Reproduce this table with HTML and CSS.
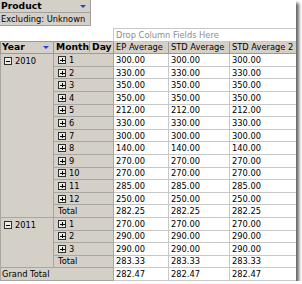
FILE: index.html
```html
<!DOCTYPE html>
<html>
<head>
<title>Pivot table</title>
<link rel="stylesheet" href="styles.css">
</head>
<body>
<div class="shot">

<div class="filter">
<div class="filter-head"><b>Product</b><span class="arrow"></span></div>
<div class="filter-value">Excluding: Unknown</div>
</div>

<table class="pivot">
<colgroup>
<col class="c-year"><col class="c-month"><col class="c-ep"><col class="c-std"><col class="c-std2">
</colgroup>
<tr class="drop-row">
<td colspan="2" class="blank"></td>
<td colspan="3" class="drop-zone">Drop Column Fields Here</td>
</tr>
<tr class="head">
<th class="field">Year<span class="arrow"></span></th>
<th class="field split"><span class="f-month">Month</span><span class="f-day">Day</span></th>
<th>EP Average</th><th>STD Average</th><th>STD Average 2</th>
</tr>
<tr><td rowspan="13" class="year"><span class="box minus"></span>2010</td><td class="month"><span class="box plus"></span>1</td><td>300.00</td><td>300.00</td><td>300.00</td></tr>
<tr><td class="month"><span class="box plus"></span>2</td><td>330.00</td><td>330.00</td><td>330.00</td></tr>
<tr><td class="month"><span class="box plus"></span>3</td><td>350.00</td><td>350.00</td><td>350.00</td></tr>
<tr><td class="month"><span class="box plus"></span>4</td><td>350.00</td><td>350.00</td><td>350.00</td></tr>
<tr><td class="month"><span class="box plus"></span>5</td><td>212.00</td><td>212.00</td><td>212.00</td></tr>
<tr><td class="month"><span class="box plus"></span>6</td><td>330.00</td><td>330.00</td><td>330.00</td></tr>
<tr><td class="month"><span class="box plus"></span>7</td><td>300.00</td><td>300.00</td><td>300.00</td></tr>
<tr><td class="month"><span class="box plus"></span>8</td><td>140.00</td><td>140.00</td><td>140.00</td></tr>
<tr><td class="month"><span class="box plus"></span>9</td><td>270.00</td><td>270.00</td><td>270.00</td></tr>
<tr><td class="month"><span class="box plus"></span>10</td><td>270.00</td><td>270.00</td><td>270.00</td></tr>
<tr><td class="month"><span class="box plus"></span>11</td><td>285.00</td><td>285.00</td><td>285.00</td></tr>
<tr><td class="month"><span class="box plus"></span>12</td><td>250.00</td><td>250.00</td><td>250.00</td></tr>
<tr><td class="month">Total</td><td>282.25</td><td>282.25</td><td>282.25</td></tr>
<tr><td rowspan="4" class="year"><span class="box minus"></span>2011</td><td class="month"><span class="box plus"></span>1</td><td>270.00</td><td>270.00</td><td>270.00</td></tr>
<tr><td class="month"><span class="box plus"></span>2</td><td>290.00</td><td>290.00</td><td>290.00</td></tr>
<tr><td class="month"><span class="box plus"></span>3</td><td>290.00</td><td>290.00</td><td>290.00</td></tr>
<tr><td class="month">Total</td><td>283.33</td><td>283.33</td><td>283.33</td></tr>
<tr><td colspan="2" class="grand">Grand Total</td><td>282.47</td><td>282.47</td><td>282.47</td></tr>
</table>

</div>
</body>
</html>
```

FILE: styles.css
```css
/* Pivot table screenshot */

body
{ margin: 0;
background-color: white;
font-family: "DejaVu Sans", sans-serif;
font-size: 8.3px;
color: black;
}

div.shot
{ width: 296px;
height: 281px;
background-color: white;
box-shadow: 3px 3px 3px rgba(0, 0, 0, 0.6);
overflow: hidden;
}

/* Page filter */

div.filter
{ width: 90px;
border-right: 1px solid #a0a0a0;
border-bottom: 1px solid #a0a0a0;
}

div.filter-head, div.filter-value
{ height: 12px;
line-height: 12px;
padding-left: 1px;
background-color: #d4d0c8;
display: flex;
align-items: center;
}

div.filter-head
{ border-bottom: 1px solid #a0a0a0;
}

div.filter-head b
{ font-size: 9.2px;
flex: 1;
}

span.arrow
{ width: 0;
height: 0;
border-left: 3px solid transparent;
border-right: 3px solid transparent;
border-top: 3px solid #2040e0;
margin-right: 4px;
}

/* Pivot grid */

table.pivot
{ margin-top: 2px;
width: 296px;
table-layout: fixed;
border-collapse: collapse;
}

col.c-year { width: 53px; }
col.c-month { width: 60px; }
col.c-ep { width: 55px; }
col.c-std { width: 61px; }
col.c-std2 { width: 67px; }

table.pivot tr
{ height: 12.6px;
}

table.pivot td, table.pivot th
{ padding: 0 0 0 2px;
line-height: 10px;
white-space: nowrap;
overflow: hidden;
text-align: left;
vertical-align: middle;
border: 1px solid #c8c8c8;
font-weight: normal;
}

table.pivot td.blank
{ border: none;
}

table.pivot td.drop-zone
{ color: #8c8c8c;
}

table.pivot tr.head th
{ background-color: #d4d0c8;
border: 1px solid #9c9a94;
}

table.pivot th.field
{ font-weight: bold;
font-size: 9.2px;
padding-left: 1px;
}

table.pivot th.field span.arrow
{ display: inline-block;
vertical-align: middle;
margin-left: 18px;
margin-right: 0;
}

table.pivot th.split
{ padding: 0;
}

table.pivot th.split span
{ display: inline-block;
padding-left: 2px;
}

span.f-month
{ width: 33px;
border-right: 1px solid #9c9a94;
}

table.pivot td.year
{ background-color: #d4d0c8;
vertical-align: top;
padding-top: 2px;
padding-left: 3px;
border-color: #a8a6a0;
}

table.pivot td.month, table.pivot td.grand
{ background-color: #d4d0c8;
border-color: #a8a6a0;
}

table.pivot td.month
{ padding-left: 4px;
}

table.pivot td.grand
{ padding-left: 1px;
}

span.box
{ display: inline-block;
position: relative;
width: 8px;
height: 8px;
box-sizing: border-box;
border: 1px solid #303030;
background-color: #ecebe6;
margin-right: 3px;
vertical-align: -1px;
}

span.box:before
{ content: "";
position: absolute;
left: 1px;
top: 2px;
width: 4px;
height: 1px;
background-color: #000;
}

span.plus:after
{ content: "";
position: absolute;
left: 2px;
top: 0px;
width: 1px;
height: 4px;
margin-top: 1px;
background-color: #000;
}

span.box.plus:after
{ left: 3px;
}

span.box:before
{ left: 1px;
top: 3px;
}

span.box.plus:before
{ width: 5px;
left: 1px;
}

span.box.minus:before
{ width: 4px;
left: 1px;
}
```
